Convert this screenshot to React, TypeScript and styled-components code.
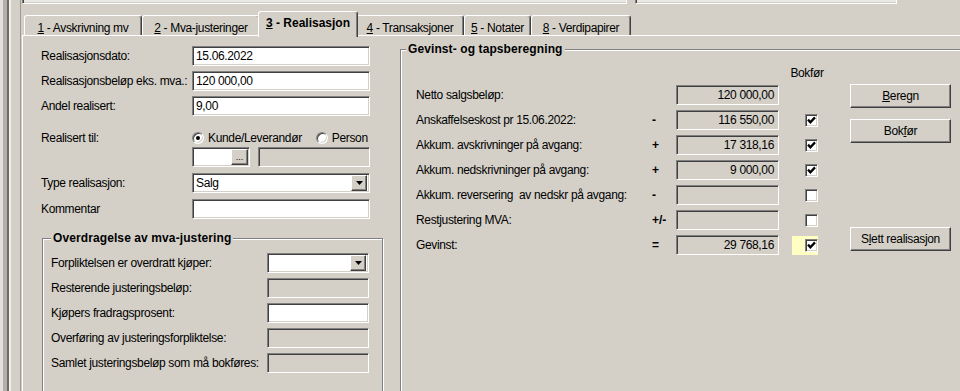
import React from "react";
import styled, { createGlobalStyle } from "styled-components";

const FACE = "#d4d0c8";

const tabs = [
  { key: "1", text: " - Avskrivning mv", w: 118 },
  { key: "2", text: " - Mva-justeringer", w: 118 },
  { key: "3", text: " - Realisasjon", w: 96, active: true },
  { key: "4", text: " - Transaksjoner", w: 108 },
  { key: "5", text: " - Notater", w: 67 },
  { key: "8", text: " - Verdipapirer", w: 100 },
];

const calcRows = [
  { label: "Netto salgsbeløp:", sign: "", value: "120 000,00", check: null },
  { label: "Anskaffelseskost pr 15.06.2022:", sign: "-", value: "116 550,00", check: true },
  { label: "Akkum. avskrivninger på avgang:", sign: "+", value: "17 318,16", check: true },
  { label: "Akkum. nedskrivninger på avgang:", sign: "+", value: "9 000,00", check: true },
  { label: "Akkum. reversering  av nedskr på avgang:", sign: "-", value: "", check: false },
  { label: "Restjustering MVA:", sign: "+/-", value: "", check: false },
  { label: "Gevinst:", sign: "=", value: "29 768,16", check: true, highlight: true },
];

const CheckMark = () => (
  <svg width="9" height="9" viewBox="0 0 9 9">
    <path d="M1 3.6 L3.4 6.2 L8 1.4" stroke="#000" strokeWidth="2.3" fill="none" />
  </svg>
);

const DownArrow = () => (
  <svg width="7" height="4" viewBox="0 0 7 4">
    <polygon points="0,0 7,0 3.5,4" fill="#000" />
  </svg>
);

const App: React.FC = () => {
  return (
    <Window>
      <GlobalStyle />
      <SideRail />
      <Main>
        <TopRow>
          <TopField $w={605} />
          <TopField $w={262} />
        </TopRow>

        <TabStrip>
          {tabs.map((t) => (
            <Tab key={t.key} $w={t.w} $active={t.active}>
              <u>{t.key}</u>
              {t.text}
            </Tab>
          ))}
        </TabStrip>

        <Panel>
          <LeftCol>
            <FormRow $mt={0}>
              <Label>Realisasjonsdato:</Label>
              <Field>15.06.2022</Field>
            </FormRow>
            <FormRow $mt={5}>
              <Label>Realisasjonsbeløp eks. mva.:</Label>
              <Field>120 000,00</Field>
            </FormRow>
            <FormRow $mt={5}>
              <Label>Andel realisert:</Label>
              <Field>9,00</Field>
            </FormRow>

            <FormRow $mt={15}>
              <Label>Realisert til:</Label>
              <RadioGroup>
                <RadioOption>
                  <Radio>
                    <RadioDot />
                  </Radio>
                  Kunde/Leverandør
                </RadioOption>
                <RadioOption>
                  <Radio />
                  Person
                </RadioOption>
              </RadioGroup>
            </FormRow>

            <FormRow $mt={2}>
              <span />
              <LookupLine>
                <Field $w={58} $pad={0}>
                  <SmallButton>...</SmallButton>
                </Field>
                <Field $disabled />
              </LookupLine>
            </FormRow>

            <FormRow $mt={6}>
              <Label>Type realisasjon:</Label>
              <Field $pad={2}>
                <SelectText>Salg</SelectText>
                <DropButton>
                  <DownArrow />
                </DropButton>
              </Field>
            </FormRow>
            <FormRow $mt={6}>
              <Label>Kommentar</Label>
              <Field />
            </FormRow>

            <GroupBox $mt={12} $ml={1} $w={341} $pl={8}>
              <GroupTitle>Overdragelse av mva-justering</GroupTitle>
              <GroupRow $mt={0}>
                <Label>Forpliktelsen er overdratt kjøper:</Label>
                <Field $pad={2}>
                  <SelectText />
                  <DropButton>
                    <DownArrow />
                  </DropButton>
                </Field>
              </GroupRow>
              <GroupRow $mt={5}>
                <Label>Resterende justeringsbeløp:</Label>
                <Field $disabled />
              </GroupRow>
              <GroupRow $mt={5}>
                <Label>Kjøpers fradragsprosent:</Label>
                <Field />
              </GroupRow>
              <GroupRow $mt={5}>
                <Label>Overføring av justeringsforpliktelse:</Label>
                <Field $disabled />
              </GroupRow>
              <GroupRow $mt={5}>
                <Label>Samlet justeringsbeløp som må bokføres:</Label>
                <Field $disabled />
              </GroupRow>
            </GroupBox>
          </LeftCol>

          <GroupBox $mt={6} $ml={0} $w={600} $pl={5}>
            <GroupTitle>Gevinst- og tapsberegning</GroupTitle>
            <CalcArea>
              <CalcGrid>
                <span />
                <span />
                <span />
                <HeaderCell>Bokfør</HeaderCell>
                {calcRows.map((r) => (
                  <React.Fragment key={r.label}>
                    <Label>{r.label}</Label>
                    <Sign>{r.sign}</Sign>
                    <Field $disabled $right>
                      {r.value}
                    </Field>
                    <CheckCell $highlight={r.highlight}>
                      {r.check !== null && (
                        <CheckBox>{r.check && <CheckMark />}</CheckBox>
                      )}
                    </CheckCell>
                  </React.Fragment>
                ))}
              </CalcGrid>

              <ButtonColumn>
                <Button $mt={16}>
                  <u>B</u>eregn
                </Button>
                <Button $mt={11}>
                  Bok<u>f</u>ør
                </Button>
                <Button $mt={84}>
                  S<u>l</u>ett realisasjon
                </Button>
              </ButtonColumn>
            </CalcArea>
          </GroupBox>
        </Panel>
      </Main>
    </Window>
  );
};

// css

const GlobalStyle = createGlobalStyle`
  html, body {
    margin: 0;
    padding: 0;
    background: ${FACE};
  }
  body {
    font-family: "Liberation Sans", Arial, sans-serif;
    font-size: 12px;
    color: #000;
  }
`;

const Window = styled.div`
  display: flex;
  width: 960px;
  height: 391px;
  overflow: hidden;
  background: ${FACE};
  letter-spacing: -0.35px;
`;

const SideRail = styled.div`
  flex: 0 0 22px;
  background: linear-gradient(
    to right,
    #e4e1dc 0, #e4e1dc 3px,
    #b3afa9 3px, #b3afa9 7px,
    #6f6b66 7px, #6f6b66 9px,
    #f2f0ec 9px, #f2f0ec 11px,
    ${FACE} 11px, ${FACE} 20px,
    #9d9993 20px, #9d9993 21px,
    ${FACE} 21px
  );
`;

const Main = styled.div`
  flex: 1;
  display: flex;
  flex-direction: column;
  min-width: 0;
`;

const TopRow = styled.div`
  height: 11px;
  display: flex;
  gap: 8px;
  align-items: flex-start;
`;

const TopField = styled.div<{ $w: number }>`
  width: ${(p) => p.$w}px;
  height: 4px;
  box-sizing: border-box;
  background: #ebe9e5;
  border-left: 1px solid #808080;
  border-right: 1px solid #fff;
  border-bottom: 1px solid #fff;
  box-shadow: inset 1px 0 0 #404040, inset 0 -1px 0 ${FACE};
`;

const TabStrip = styled.div`
  display: flex;
  align-items: flex-end;
  height: 24px;
  padding-left: 2px;
`;

const Tab = styled.div<{ $w: number; $active?: boolean }>`
  position: relative;
  z-index: ${(p) => (p.$active ? 1 : 0)};
  box-sizing: border-box;
  width: ${(p) => p.$w + (p.$active ? 4 : 0)}px;
  height: ${(p) => (p.$active ? 26 : 20)}px;
  margin: 0 ${(p) => (p.$active ? -2 : 0)}px ${(p) => (p.$active ? -2 : 0)}px;
  padding-top: ${(p) => (p.$active ? 4 : 5)}px;
  display: flex;
  justify-content: center;
  align-items: flex-start;
  line-height: 14px;
  white-space: pre;
  font-weight: ${(p) => (p.$active ? "bold" : "normal")};
  letter-spacing: ${(p) => (p.$active ? "0" : "-0.35px")};
  background: ${FACE};
  border-top: 1px solid #fff;
  border-left: 1px solid #fff;
  border-right: 1px solid #404040;
  border-radius: 3px 3px 0 0;
  box-shadow: inset -1px 0 0 #808080;
`;

const Panel = styled.div`
  flex: 1;
  display: flex;
  min-height: 0;
  overflow: hidden;
  border-top: 1px solid #fff;
  border-left: 1px solid #fff;
`;

const LeftCol = styled.div`
  flex: 0 0 377px;
  box-sizing: border-box;
  padding: 10px 0 0 18px;
  display: flex;
  flex-direction: column;
`;

const FormRow = styled.div<{ $mt: number }>`
  display: grid;
  grid-template-columns: 151px 178px;
  align-items: center;
  height: 20px;
  margin-top: ${(p) => p.$mt}px;
`;

const GroupRow = styled.div<{ $mt: number }>`
  display: grid;
  grid-template-columns: 216px 102px;
  align-items: center;
  height: 20px;
  margin-top: ${(p) => p.$mt}px;
`;

const Label = styled.span`
  line-height: 14px;
  white-space: pre;
`;

const Field = styled.div<{ $disabled?: boolean; $right?: boolean; $w?: number; $pad?: number }>`
  box-sizing: border-box;
  height: 20px;
  width: ${(p) => (p.$w ? `${p.$w}px` : "auto")};
  flex: ${(p) => (p.$w ? "0 0 auto" : "1")};
  display: flex;
  align-items: center;
  justify-content: ${(p) => (p.$right ? "flex-end" : "flex-start")};
  padding: ${(p) => (p.$pad !== undefined ? `${p.$pad}px` : "0 4px 0 3px")};
  line-height: 14px;
  white-space: nowrap;
  background: ${(p) => (p.$disabled ? FACE : "#fff")};
  border-top: 1px solid #808080;
  border-left: 1px solid #808080;
  border-right: 1px solid #fff;
  border-bottom: 1px solid #fff;
  box-shadow: inset 1px 1px 0 #404040, inset -1px -1px 0 ${FACE};
`;

const SelectText = styled.span`
  flex: 1;
  padding-left: 1px;
`;

const RaisedBox = styled.div`
  box-sizing: border-box;
  display: flex;
  align-items: center;
  justify-content: center;
  background: ${FACE};
  border-top: 1px solid #fff;
  border-left: 1px solid #fff;
  border-right: 1px solid #404040;
  border-bottom: 1px solid #404040;
  box-shadow: inset -1px -1px 0 #808080;
`;

const DropButton = styled(RaisedBox)`
  width: 16px;
  height: 16px;
`;

const SmallButton = styled(RaisedBox)`
  width: 17px;
  height: 16px;
  margin: 0 1px 0 auto;
  font-size: 9px;
  letter-spacing: 0;
  line-height: 8px;
  align-items: flex-end;
  padding-bottom: 3px;
`;

const LookupLine = styled.div`
  display: flex;
  gap: 8px;
  height: 20px;
`;

const RadioGroup = styled.div`
  display: flex;
  gap: 14px;
  align-items: center;
`;

const RadioOption = styled.label`
  display: flex;
  align-items: center;
  gap: 4px;
  line-height: 14px;
  white-space: nowrap;
`;

const Radio = styled.span`
  box-sizing: border-box;
  width: 12px;
  height: 12px;
  border-radius: 50%;
  background: #fff;
  display: flex;
  align-items: center;
  justify-content: center;
  border: 1px solid;
  border-color: #808080 #fff #fff #808080;
  box-shadow: inset 1px 1px 0 #404040, inset -1px -1px 0 ${FACE};
`;

const RadioDot = styled.span`
  width: 4px;
  height: 4px;
  border-radius: 50%;
  background: #000;
`;

const GroupBox = styled.fieldset<{ $mt: number; $ml: number; $w: number; $pl: number }>`
  box-sizing: border-box;
  flex: 0 0 auto;
  width: ${(p) => p.$w}px;
  min-width: 0;
  height: 420px;
  margin: ${(p) => p.$mt}px 0 0 ${(p) => p.$ml}px;
  padding: 8px 0 0 ${(p) => p.$pl}px;
  border: 1px solid #808080;
  box-shadow: inset 1px 1px 0 #fff, 1px 1px 0 #fff;
`;

const GroupTitle = styled.legend`
  padding: 0 2px;
  font-weight: bold;
  line-height: 14px;
  letter-spacing: 0.1px;
  background: ${FACE};
`;

const CalcArea = styled.div`
  display: flex;
  align-items: flex-start;
  margin: 4px 0 0 10px;
`;

const CalcGrid = styled.div`
  display: grid;
  grid-template-columns: 236px 24px 103px 51px;
  grid-template-rows: 14px;
  grid-auto-rows: 20px;
  row-gap: 5px;
  align-items: center;
  margin-top: -2px;
`;

const HeaderCell = styled.span`
  text-align: center;
  line-height: 14px;
  padding-left: 5px;
`;

const Sign = styled.span`
  font-weight: bold;
  letter-spacing: 0;
  line-height: 14px;
`;

const CheckCell = styled.div<{ $highlight?: boolean }>`
  width: 26px;
  height: 19px;
  margin: 0 auto;
  display: flex;
  align-items: center;
  justify-content: flex-end;
  background: ${(p) => (p.$highlight ? "#ffffc4" : "transparent")};
`;

const CheckBox = styled.span`
  box-sizing: border-box;
  width: 13px;
  height: 13px;
  padding: 1px;
  display: flex;
  align-items: center;
  justify-content: center;
  background: #fff;
  border: 1px solid;
  border-color: #808080 #fff #fff #808080;
  box-shadow: inset 1px 1px 0 #404040, inset -1px -1px 0 ${FACE};
`;

const ButtonColumn = styled.div`
  display: flex;
  flex-direction: column;
  margin-left: 20px;
`;

const Button = styled(RaisedBox)<{ $mt: number }>`
  width: 101px;
  height: 24px;
  margin-top: ${(p) => p.$mt}px;
  line-height: 14px;
  white-space: nowrap;
`;

export default App;
